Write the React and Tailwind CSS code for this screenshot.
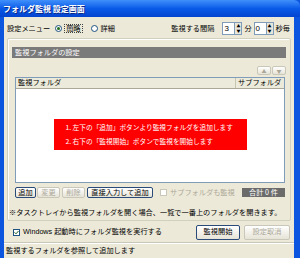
import React from "react"

const jp = "font-['Noto_Sans_CJK_JP',sans-serif]"

function XpButton({ children, disabled, className = "" }) {
  return (
    <div
      className={
        "flex items-center justify-center rounded-[2px] border bg-linear-to-b from-white to-[#e6e3d6] leading-none " +
        (disabled ? "border-[#c9c7ba] text-[#aca899] " : "border-[#2a4a7a] text-black ") +
        className
      }
    >
      {children}
    </div>
  )
}

function Spin({ value }) {
  return (
    <div className="flex h-[13px] items-stretch">
      <div className="flex w-[13px] items-center border border-[#7f9db9] bg-white pl-[1px] font-['Liberation_Sans',sans-serif] text-[8px]">
        {value}
      </div>
      <div className="flex w-[7px] flex-col border-y border-r border-[#7f9db9] bg-[#e8e6da]">
        <div className="flex flex-1 items-center justify-center text-[4px] leading-none text-black">▲</div>
        <div className="flex flex-1 items-center justify-center text-[4px] leading-none text-black">▼</div>
      </div>
    </div>
  )
}

export default function App() {
  return (
    <div className={"flex h-[258px] w-[300px] flex-col overflow-hidden bg-[#0b55df] text-[7.2px] leading-none text-black " + jp}>
      {/* title bar */}
      <div className="flex h-[17px] shrink-0 items-center rounded-tr-[6px] bg-linear-to-b from-[#3f8ffb] via-[#0a5ae8] to-[#0444cf] pl-[3px] text-[8px] font-bold text-white [text-shadow:1px_1px_0_#0a2a8a]">
        フォルダ監視 設定画面
      </div>

      <div className="ml-[4px] mr-[6px] flex flex-1 flex-col bg-[#ece9d8]">
        {/* top row */}
        <div className="mt-[5px] flex h-[13px] items-center justify-between pl-[3px] pr-[4px]">
          <div className="flex items-center">
            <span>設定メニュー</span>
            <span className="ml-[5px] flex h-[7px] w-[7px] items-center justify-center rounded-full border border-[#1c5180] bg-white">
              <span className="h-[3px] w-[3px] rounded-full bg-[#1f6f1f]"></span>
            </span>
            <span className="ml-[2px] border border-dotted border-[#444] px-[1px]">簡略</span>
            <span className="ml-[8px] h-[7px] w-[7px] rounded-full border border-[#1c5180] bg-white"></span>
            <span className="ml-[3px]">詳細</span>
          </div>
          <div className="flex items-center">
            <span>監視する間隔</span>
            <div className="ml-[8px]"><Spin value="3" /></div>
            <span className="ml-[2px]">分</span>
            <div className="ml-[2px]"><Spin value="0" /></div>
            <span className="ml-[2px]">秒毎</span>
          </div>
        </div>

        {/* group panel */}
        <div className="mx-[3px] mt-[3px] flex h-[183px] flex-col rounded-[2px] border border-[#d0d0bf] shadow-[inset_1px_1px_0_#ffffff]">
          <div className="mx-[4px] mt-[8px] flex h-[11px] items-center bg-[#7a7a7a] pl-[3px] text-white">
            監視フォルダの設定
          </div>
          <div className="mr-[4px] mt-[8px] flex h-[9px] justify-end gap-[1px]">
            <XpButton disabled className="w-[14px] text-[5px]">▲</XpButton>
            <XpButton disabled className="w-[14px] text-[5px]">▼</XpButton>
          </div>
          <div className="ml-[7px] mr-[5px] mt-[2px] flex h-[106px] flex-col border border-[#7f9db9] bg-white">
            <div className="flex h-[11px] shrink-0 border-b border-[#aca899] bg-[#ebeadb]">
              <div className="flex flex-1 items-center border-r border-[#c7c5b2] pl-[2px]">監視フォルダ</div>
              <div className="flex w-[48px] items-center pl-[2px]">サブフォルダ</div>
            </div>
            <div className="flex flex-1 items-center justify-center pb-[3px]">
              <div className="flex h-[31px] w-[193px] flex-col justify-center gap-[7px] bg-[#ff0000] pl-[12px] text-[6.7px] text-white">
                <div>1. 左下の「追加」ボタンより監視フォルダを追加します</div>
                <div>2. 右下の「監視開始」ボタンで監視を開始します</div>
              </div>
            </div>
          </div>
          <div className="ml-[7px] mr-[5px] mt-[4px] flex h-[11px] items-center">
            <XpButton className="h-full w-[21px]">追加</XpButton>
            <XpButton disabled className="ml-[1px] h-full w-[23px]">変更</XpButton>
            <XpButton disabled className="ml-[2px] h-full w-[23px]">削除</XpButton>
            <XpButton className="ml-[2px] h-full w-[66px]">直接入力して追加</XpButton>
            <span className="ml-[7px] h-[7px] w-[7px] border border-[#c9c7ba] bg-white"></span>
            <span className="ml-[3px] text-[#aca899]">サブフォルダも監視</span>
            <div className="ml-auto flex h-[9px] w-[43px] items-center justify-center bg-[#6b6b6b] text-white">
              合計 0 件
            </div>
          </div>
          <div className="ml-[1px] mt-[11px] whitespace-nowrap">
            ※タスクトレイから監視フォルダを開く場合、一覧で一番上のフォルダを開きます。
          </div>
        </div>

        {/* bottom row */}
        <div className="mt-[3px] flex h-[16px] items-center pl-[9px] pr-[4px]">
          <span className="flex h-[7px] w-[7px] items-center justify-center border border-[#1c5180] bg-white">
            <svg width="5" height="5" viewBox="0 0 5 5">
              <path d="M0.5 2.3 L2 3.8 L4.5 1" fill="none" stroke="#1f5f1f" strokeWidth="1" />
            </svg>
          </span>
          <span className="ml-[3px]">
            <span className="font-['Liberation_Sans',sans-serif]">Windows </span>起動時にフォルダ監視を実行する
          </span>
          <XpButton className="ml-auto h-[15px] w-[44px]">監視開始</XpButton>
          <XpButton disabled className="ml-[4px] h-[15px] w-[46px]">設定取消</XpButton>
        </div>

        {/* status bar */}
        <div className="mt-[2px] flex flex-1 items-center border-t border-[#c9c7ba] pl-[2px] shadow-[inset_0_1px_0_#ffffff]">
          監視するフォルダを参照して追加します
        </div>
      </div>
    </div>
  )
}
